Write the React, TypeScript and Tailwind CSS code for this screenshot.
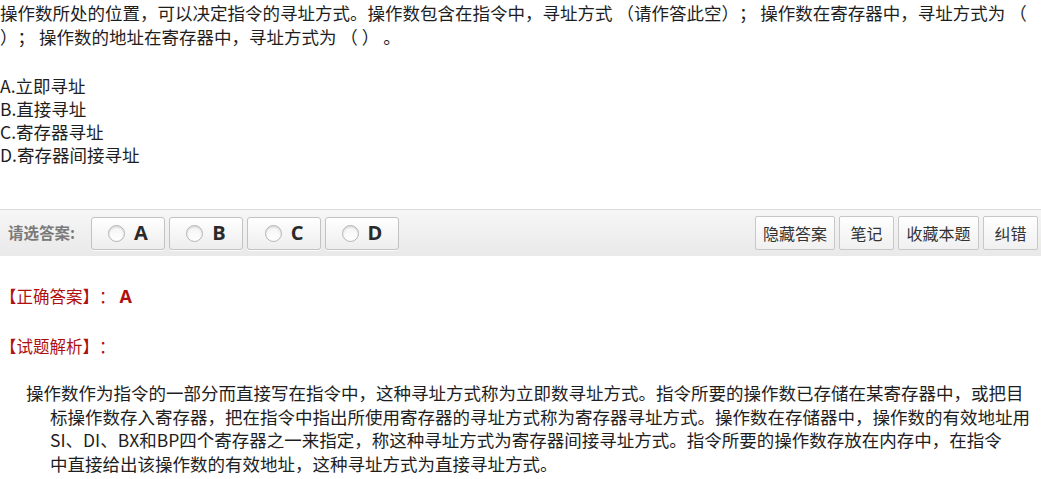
import React from "react";

const font = { fontFamily: '"Noto Sans CJK SC", "Noto Sans", sans-serif' };

function Radio() {
  return (
    <span className="inline-block w-[17px] h-[17px] rounded-full border border-[#b5b5b5] bg-gradient-to-b from-[#f4f4f4] to-white shadow-[inset_0_1px_2px_rgba(0,0,0,0.15)]" />
  );
}

function ChoiceBtn({ letter }: { letter: string }) {
  return (
    <button className="w-[74px] h-[33px] flex items-center justify-center gap-[9px] rounded-[3px] border border-[#c2c2c2] bg-gradient-to-b from-white to-[#ededed] shadow-[0_1px_0_rgba(255,255,255,0.8)]">
      <Radio />
      <span
        className="text-[20px] font-bold text-[#2a2a2a] leading-none"
        style={{ fontFamily: '"Open Sans", "Noto Sans", sans-serif' }}
      >
        {letter}
      </span>
    </button>
  );
}

function ToolBtn({ label, w }: { label: string; w: string }) {
  return (
    <button
      className={`${w} h-[34px] flex items-center justify-center rounded-[2px] border border-[#c8c8c8] bg-gradient-to-b from-white to-[#f0f0f0] text-[16px] text-[#333]`}
    >
      {label}
    </button>
  );
}

export default function App() {
  return (
    <div
      className="w-[1041px] h-[479px] bg-white text-[#1e1e1e] overflow-hidden [text-spacing-trim:space-all]"
      style={font}
    >
      <div className="text-[17.5px] leading-[24px] pt-[1px] whitespace-nowrap">
        操作数所处的位置，可以决定指令的寻址方式。操作数包含在指令中，寻址方式 （请作答此空）； 操作数在寄存器中，寻址方式为 （
        <br />
        ）； 操作数的地址在寄存器中，寻址方式为 （ ） 。
      </div>

      <div className="mt-[25px] text-[17.5px] leading-[23px]">
        <div>A.立即寻址</div>
        <div>B.直接寻址</div>
        <div>C.寄存器寻址</div>
        <div>D.寄存器间接寻址</div>
      </div>

      <div className="mt-[43px] h-[47px] border-t border-[#dcdcdc] bg-gradient-to-b from-[#f6f6f6] to-[#e9e9e9] flex items-center pl-[8px] pr-[3px]">
        <span className="text-[15.5px] font-bold text-[#7a7a7a] w-[83px]">请选答案:</span>
        <div className="flex gap-[4px]">
          <ChoiceBtn letter="A" />
          <ChoiceBtn letter="B" />
          <ChoiceBtn letter="C" />
          <ChoiceBtn letter="D" />
        </div>
        <div className="ml-auto flex gap-[4px]">
          <ToolBtn label="隐藏答案" w="w-[80px]" />
          <ToolBtn label="笔记" w="w-[55px]" />
          <ToolBtn label="收藏本题" w="w-[81px]" />
          <ToolBtn label="纠错" w="w-[55px]" />
        </div>
      </div>

      <div className="mt-[28px] leading-[24px] text-[16.5px] text-[#b00f0f] flex items-center">
        <span>【正确答案】：</span>
        <span
          className="ml-[4px] text-[18px] font-bold"
          style={{ fontFamily: '"Open Sans", "Noto Sans", sans-serif' }}
        >
          A
        </span>
      </div>

      <div className="mt-[26px] leading-[24px] text-[16.5px] text-[#b00f0f]">【试题解析】：</div>

      <div className="mt-[23px] pl-[50px] -indent-[24px] text-[17.5px] leading-[23.7px] whitespace-nowrap">
        操作数作为指令的一部分而直接写在指令中，这种寻址方式称为立即数寻址方式。指令所要的操作数已存储在某寄存器中，或把目
        <br />
        标操作数存入寄存器，把在指令中指出所使用寄存器的寻址方式称为寄存器寻址方式。操作数在存储器中，操作数的有效地址用
        <br />
        SI、DI、BX和BP四个寄存器之一来指定，称这种寻址方式为寄存器间接寻址方式。指令所要的操作数存放在内存中，在指令
        <br />
        中直接给出该操作数的有效地址，这种寻址方式为直接寻址方式。
      </div>
    </div>
  );
}
